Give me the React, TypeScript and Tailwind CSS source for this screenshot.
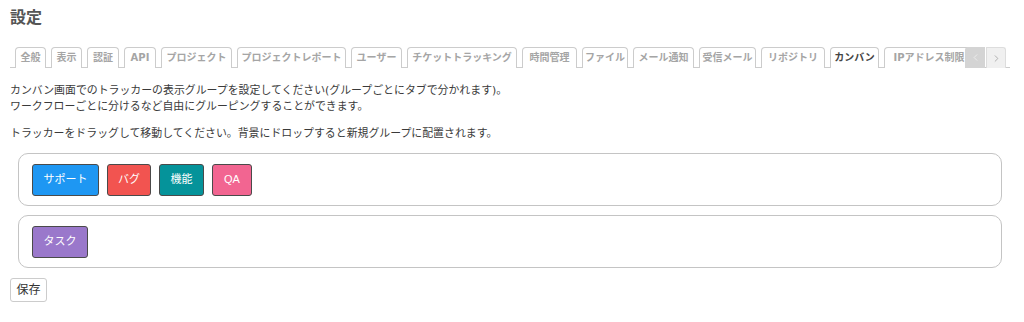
import { ChevronLeft, ChevronRight } from "lucide-react";

const font = { fontFamily: '"DejaVu Sans", "Noto Sans CJK JP", sans-serif' };

const tabs = [
  { label: "全般", w: "w-[31px]" },
  { label: "表示", w: "w-[31px]" },
  { label: "認証", w: "w-[32px]" },
  { label: "API", w: "w-[32px]" },
  { label: "プロジェクト", w: "w-[71px]" },
  { label: "プロジェクトレポート", w: "w-[109px]" },
  { label: "ユーザー", w: "w-[51px]" },
  { label: "チケットトラッキング", w: "w-[110px]" },
  { label: "時間管理", w: "w-[55px]" },
  { label: "ファイル", w: "w-[46px]" },
  { label: "メール通知", w: "w-[61px]" },
  { label: "受信メール", w: "w-[57px]" },
  { label: "リポジトリ", w: "w-[64px]" },
  { label: "カンバン", w: "w-[49px]", active: true },
  { label: "IPアドレス制限", w: "w-[90px]" },
];

const groups = [
  [
    { label: "サポート", cls: "w-[67px] bg-[#1e97f3]" },
    { label: "バグ", cls: "w-[44px] bg-[#f25450]" },
    { label: "機能", cls: "w-[45px] bg-[#05939a]" },
    { label: "QA", cls: "w-[40px] h-[30px] bg-[#f26591]" },
  ],
  [{ label: "タスク", cls: "w-[56px] bg-[#9a78cb]" }],
];

export default function App() {
  return (
    <div className="bg-white w-[1024px] h-[322px] pl-[10px] pr-[14px] pt-[8px] text-[#333]" style={font}>

      {/* Title */}

      <h2 className="text-[16px] leading-[20px] font-bold text-[#555]">
        設定
      </h2>

      {/* Tabs */}

      <div className="relative mt-[19px] border-b border-[#ccc] h-[21px]">
        <div className="flex gap-[5px] pl-[5px] overflow-hidden h-[21px]">
          {tabs.map((t) => (
            <div
              key={t.label}
              className={`${t.w} shrink-0 h-[21px] border border-[#ccc] rounded-t-[4px] text-[10px] leading-[20px] font-bold text-center whitespace-nowrap overflow-hidden ${
                t.active ? "bg-white text-[#444] border-b-white h-[22px]" : "bg-white text-[#a5a5a5] border-b-0"
              }`}
            >
              {t.label}
            </div>
          ))}
        </div>

        <div className="absolute right-[4px] top-0 flex gap-[1px] h-[21px]">
          <div className="w-[20px] h-[21px] bg-[#d4d4d4] rounded-tl-[3px] flex items-center justify-center text-[#eee]">
            <ChevronLeft size={11} strokeWidth={2} />
          </div>
          <div className="w-[20px] h-[21px] bg-[#f0f0f0] border border-[#ddd] border-b-0 rounded-tr-[3px] flex items-center justify-center text-[#aaa]">
            <ChevronRight size={11} strokeWidth={2} />
          </div>
        </div>
      </div>

      {/* Description */}

      <div className="mt-[15px] text-[10.9px] leading-[16px] text-[#3a3a3a]">
        <p>カンバン画面でのトラッカーの表示グループを設定してください(グループごとにタブで分かれます)。</p>
        <p>ワークフローごとに分けるなど自由にグルーピングすることができます。</p>
        <p className="mt-[11px]">トラッカーをドラッグして移動してください。背景にドロップすると新規グループに配置されます。</p>
      </div>

      {/* Groups */}

      <div className="mt-[11px] mx-[8px] flex flex-col gap-[9px]">
        {groups.map((g, i) => (
          <div
            key={i}
            className="h-[53px] border border-[#c4c4c4] rounded-[10px] px-[13px] flex items-center gap-[8px]"
          >
            {g.map((b) => (
              <div
                key={b.label}
                className={`${b.cls} h-[32px] border border-[#4a4a4a] rounded-[3px] flex items-center justify-center text-white text-[11px]`}
                style={{ fontFamily: '"Liberation Sans", "Noto Sans CJK JP", sans-serif' }}
              >
                {b.label}
              </div>
            ))}
          </div>
        ))}
      </div>

      {/* Save */}

      <button
        className="mt-[10px] w-[37px] h-[24px] border border-[#ccc] rounded-[3px] bg-white text-[12px] font-normal text-[#333]"
        style={{ fontFamily: '"Liberation Sans", "Noto Sans CJK JP", sans-serif' }}
      >
        保存
      </button>

    </div>
  );
}
